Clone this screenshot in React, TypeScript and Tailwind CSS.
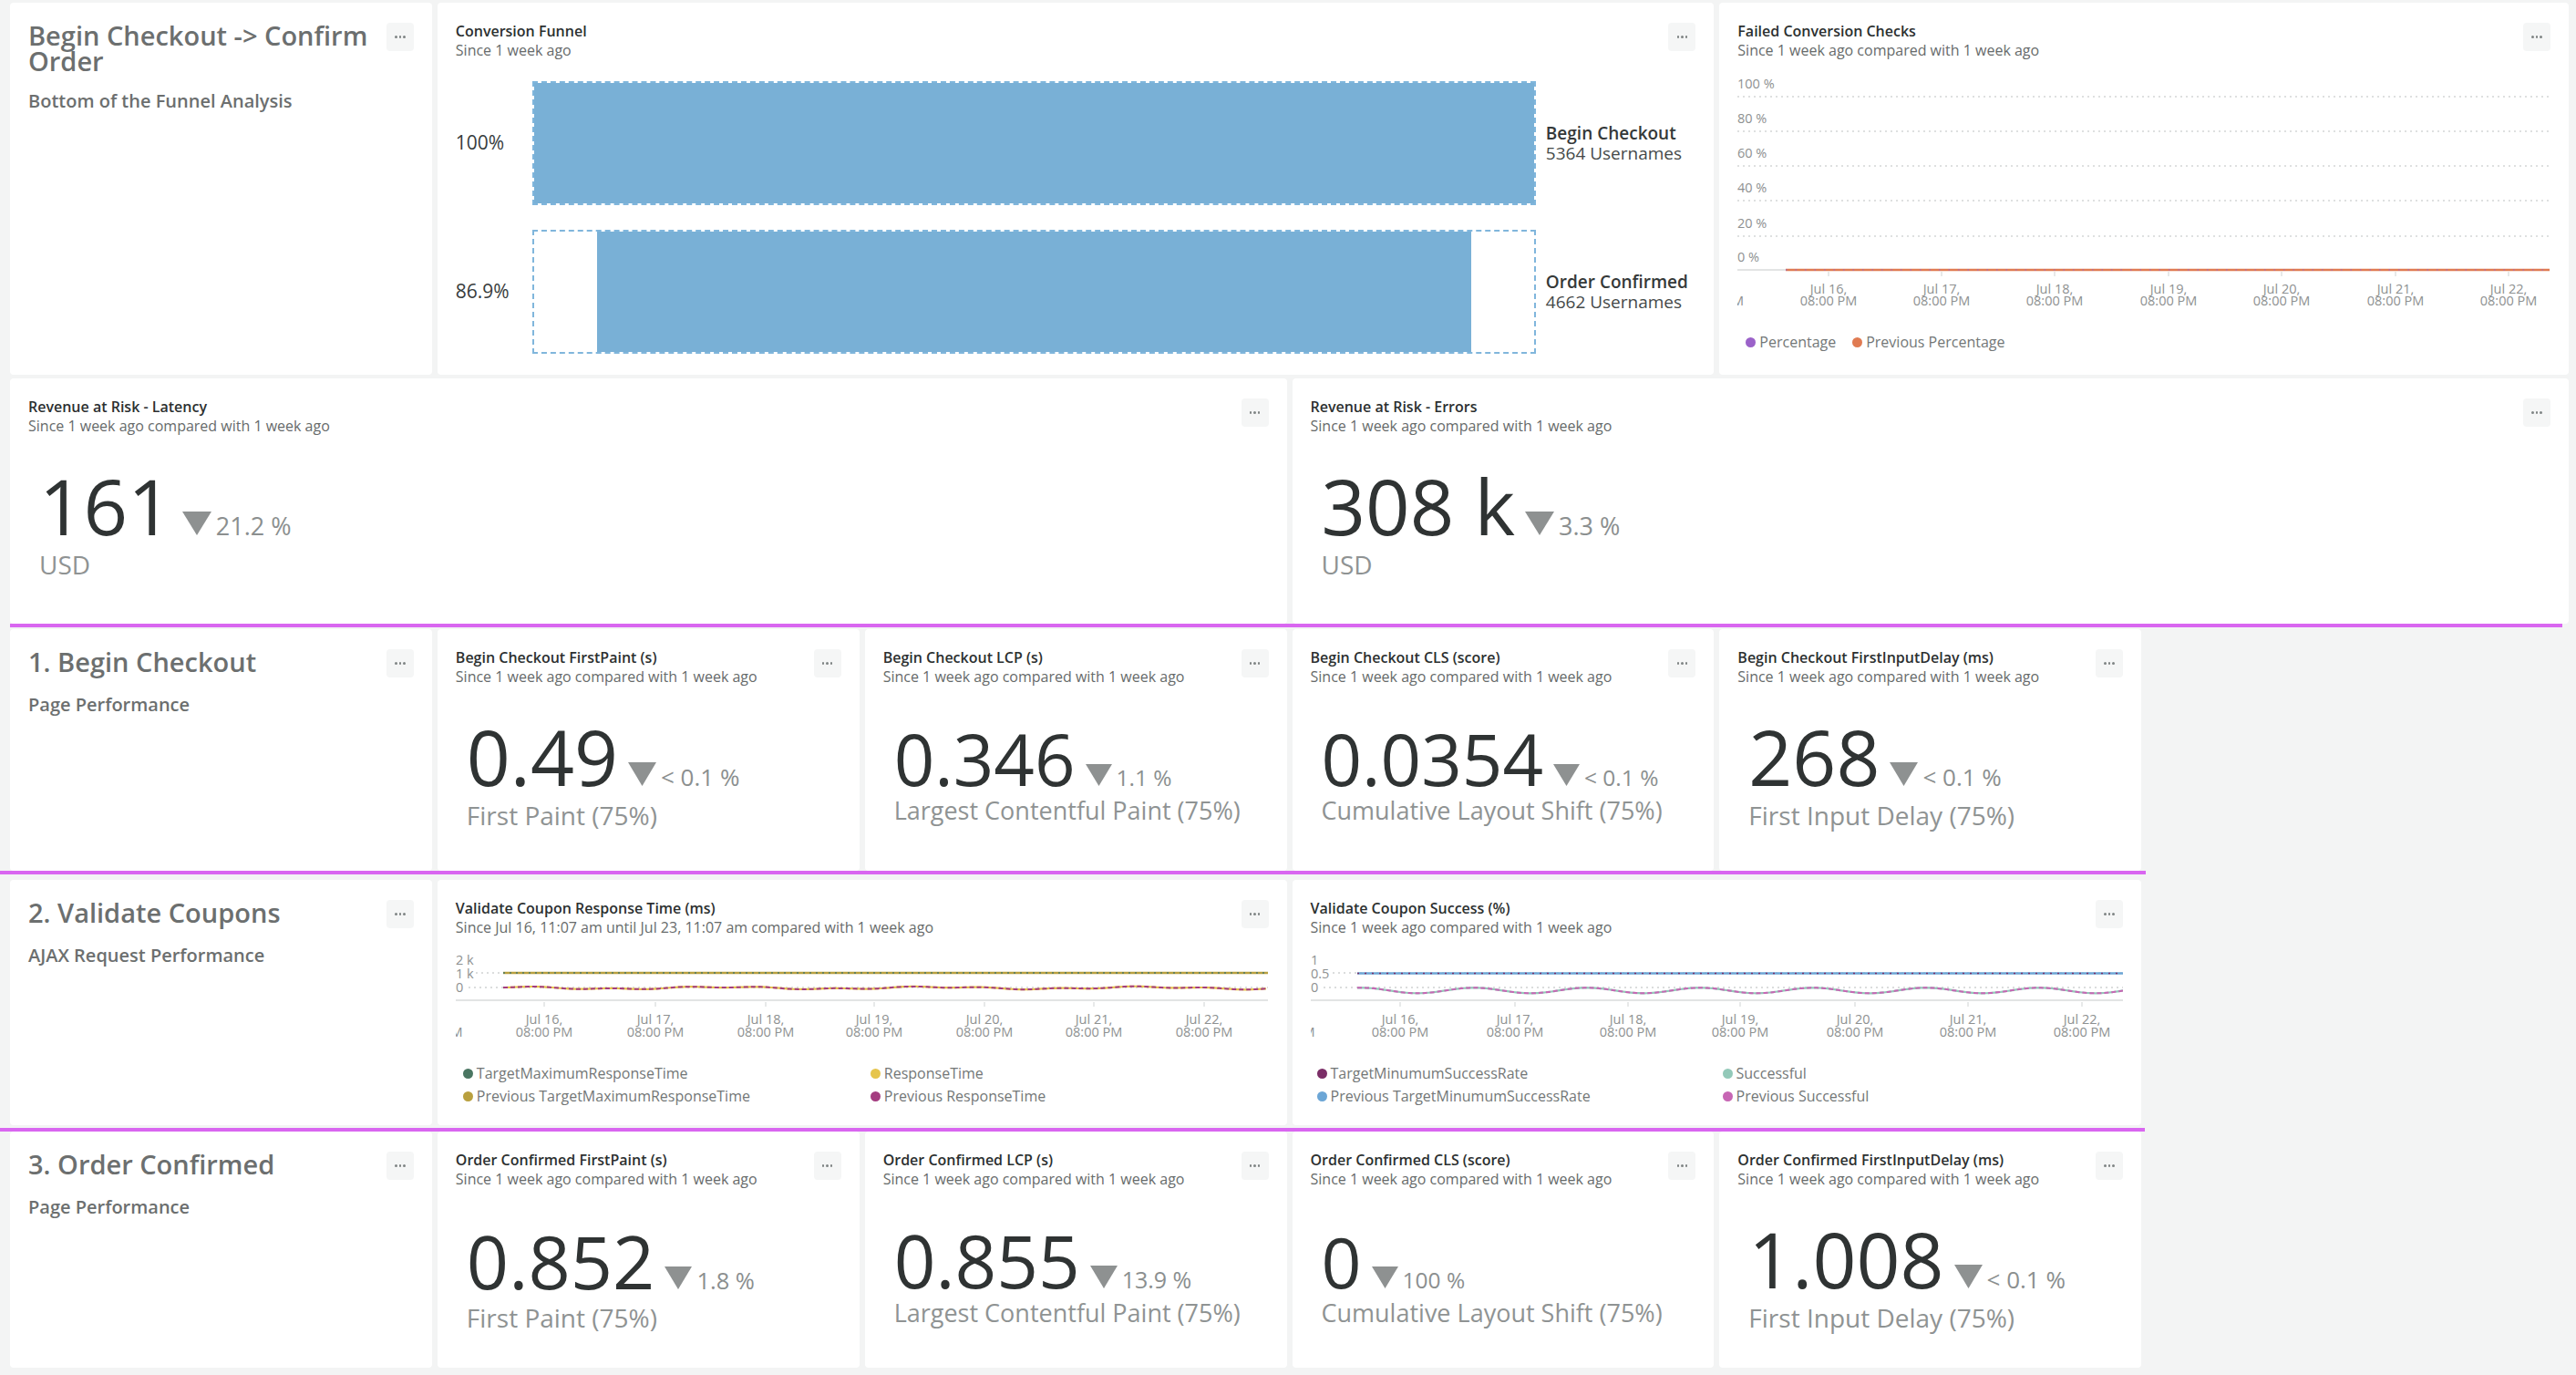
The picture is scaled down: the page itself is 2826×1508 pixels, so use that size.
import React from 'react';

type V = { num: string; trend: string; label: string; mt: string; lmt: string; tw: number; th: number };

const V85: V = { num: 'text-[85px]', trend: 'text-[27px]', label: 'text-[28px]', mt: 'mt-[34px]', lmt: 'mt-[5px]', tw: 32, th: 26 };
const V84: V = { num: 'text-[84px]', trend: 'text-[26px]', label: 'text-[28px]', mt: 'mt-[35px]', lmt: 'mt-[5px]', tw: 31, th: 26 };
const V81: V = { num: 'text-[81px]', trend: 'text-[25.5px]', label: 'text-[28px]', mt: 'mt-[38px]', lmt: 'mt-[5px]', tw: 30, th: 25 };
const V80: V = { num: 'text-[80px]', trend: 'text-[25px]', label: 'text-[27px]', mt: 'mt-[38px]', lmt: 'mt-[1px]', tw: 30, th: 25 };
const V78: V = { num: 'text-[78px]', trend: 'text-[24.5px]', label: 'text-[27px]', mt: 'mt-[40px]', lmt: 'mt-[1px]', tw: 29, th: 24 };
const V77: V = { num: 'text-[77px]', trend: 'text-[24.5px]', label: 'text-[27px]', mt: 'mt-[41px]', lmt: 'mt-[1px]', tw: 29, th: 24 };

const SUB = 'Since 1 week ago compared with 1 week ago';

function Dots() {
  return (
    <div className="w-[30px] h-[31px] shrink-0 rounded-[4px] bg-[#f5f6f6] flex items-center justify-center gap-[2px]">
      <span className="w-[2.5px] h-[2.5px] rounded-full bg-[#7f8484]" />
      <span className="w-[2.5px] h-[2.5px] rounded-full bg-[#7f8484]" />
      <span className="w-[2.5px] h-[2.5px] rounded-full bg-[#7f8484]" />
    </div>
  );
}

function Card({ className = '', children }: { className?: string; children?: React.ReactNode }) {
  return <div className={`bg-white rounded-[4px] min-w-0 ${className}`}>{children}</div>;
}

function WidgetHeader({ title, sub }: { title: string; sub: string }) {
  return (
    <div className="flex items-start justify-between">
      <div className="min-w-0">
        <div className="text-[16px] leading-[21px] font-semibold text-[#2c3030] whitespace-nowrap">{title}</div>
        <div className="text-[16px] leading-[21px] text-[#676b6b] whitespace-nowrap">{sub}</div>
      </div>
      <div className="mt-[1px] shrink-0">
        <Dots />
      </div>
    </div>
  );
}

function SectionCard({ title, sub, className = '' }: { title: string; sub: string; className?: string }) {
  return (
    <Card className={`px-[20px] pt-[22px] ${className}`}>
      <div className="flex items-start justify-between gap-[6px]">
        <div className="text-[29px] leading-[28px] font-semibold text-[#6c6f6f]">{title}</div>
        <Dots />
      </div>
      <div className="mt-[16px] text-[20px] leading-[28px] font-semibold text-[#6c6f6f]">{sub}</div>
    </Card>
  );
}

function MetricCard({
  title,
  sub = SUB,
  value,
  change,
  label,
  v,
  className = '',
}: {
  title: string;
  sub?: string;
  value: string;
  change: string;
  label: string;
  v: V;
  className?: string;
}) {
  return (
    <Card className={`px-[20px] pt-[21px] ${className}`}>
      <WidgetHeader title={title} sub={sub} />
      <div className={`pl-[12px] ${v.mt}`}>
        <div className="flex items-baseline whitespace-nowrap">
          <span className={`${v.num} leading-none text-[#2f3333]`}>{value}</span>
          <svg width={v.tw} height={v.th} className="ml-[11px] mb-[2px] shrink-0">
            <polygon points={`0,0 ${v.tw},0 ${v.tw / 2},${v.th}`} fill="#8e9191" />
          </svg>
          <span className={`${v.trend} leading-none ml-[5px] text-[#8b8f8f]`}>{change}</span>
        </div>
        <div className={`${v.label} leading-[34px] ${v.lmt} text-[#8f9393] whitespace-nowrap`}>{label}</div>
      </div>
    </Card>
  );
}

function FunnelRow({ pct, name, count, full }: { pct: string; name: string; count: string; full?: boolean }) {
  return (
    <div className="flex items-center">
      <div className="w-[84px] shrink-0 text-[21px] text-[#383c3c]">{pct}</div>
      <div className="w-[1101px] h-[136px] border-2 border-dashed border-[#80b6dc] flex shrink-0">
        <div className={full ? 'flex-1 bg-[#79b0d6]' : 'flex-1 mx-[69px] bg-[#79b0d6]'} />
      </div>
      <div className="ml-[11px] leading-[22px] text-[19px] whitespace-nowrap">
        <div className="font-semibold text-[#353939]">{name}</div>
        <div className="text-[#454949]">{count}</div>
      </div>
    </div>
  );
}

const DAYS = ['Jul 16,', 'Jul 17,', 'Jul 18,', 'Jul 19,', 'Jul 20,', 'Jul 21,', 'Jul 22,'];

function XAxis({ ticks, axisY, l1, l2, step }: { ticks: number[]; axisY: number; l1: number; l2: number; step: number }) {
  return (
    <g>
      <line x1={0} x2={891} y1={axisY} y2={axisY} stroke="#e2e4e4" strokeWidth={2} />
      {ticks.map((t, i) => (
        <g key={i}>
          <line x1={t} x2={t} y1={axisY + 2} y2={axisY + 7} stroke="#d0d3d3" strokeWidth={1} />
          <text x={t} y={l1} textAnchor="middle">
            {DAYS[i]}
          </text>
          <text x={t} y={l2} textAnchor="middle">
            08:00 PM
          </text>
        </g>
      ))}
      <text x={ticks[0] - step} y={l2} textAnchor="middle">
        08:00 PM
      </text>
    </g>
  );
}

function pathOf(x0: number, x1: number, f: (x: number) => number, step = 3) {
  let d = `M${x0},${f(x0).toFixed(2)}`;
  for (let x = x0 + step; x <= x1; x += step) d += ` L${x},${f(x).toFixed(2)}`;
  return d;
}

function FailedChart() {
  const grid = [40, 78, 116, 154, 193];
  const labels = ['100 %', '80 %', '60 %', '40 %', '20 %'];
  const ticks = [100, 224, 348, 473, 597, 722, 846];
  return (
    <svg width={891} height={290} className="block">
      <g fill="#8e9191" fontSize={14.5}>
        {grid.map((y, i) => (
          <g key={i}>
            <line x1={0} x2={891} y1={y} y2={y} stroke="#d3d6d6" strokeWidth={1.5} strokeDasharray="2 4" />
            <text x={0} y={y - 9}>
              {labels[i]}
            </text>
          </g>
        ))}
        <text x={0} y={221}>
          0 %
        </text>
        <XAxis ticks={ticks} axisY={230} l1={256} l2={269} step={124.3} />
        <line x1={53} x2={891} y1={230} y2={230} stroke="#e07b52" strokeWidth={2.5} />
        <line x1={53} x2={891} y1={230} y2={230} stroke="#9b5fc9" strokeWidth={1.2} strokeDasharray="1.5 9" />
      </g>
    </svg>
  );
}

function ResponseChart() {
  const ticks = [97, 219, 340, 459, 580, 700, 821];
  const wave = (x: number) => 55.5 - 1.1 * Math.sin(x / 37) - 0.7 * Math.sin(x / 13 + 1);
  return (
    <svg width={891} height={115} className="block">
      <g fill="#8e9191" fontSize={14.5}>
        <text x={0} y={30}>2 k</text>
        <text x={0} y={45}>1 k</text>
        <text x={0} y={60}>0</text>
        <line x1={22} x2={891} y1={39} y2={39} stroke="#cfd2d2" strokeWidth={1.5} strokeDasharray="2 4" />
        <line x1={14} x2={891} y1={55} y2={55} stroke="#cfd2d2" strokeWidth={1.5} strokeDasharray="2 4" />
        <XAxis ticks={ticks} axisY={69} l1={95} l2={109} step={120.7} />
        <line x1={52} x2={891} y1={39} y2={39} stroke="#b9a03f" strokeWidth={2.5} />
        <line x1={52} x2={891} y1={39} y2={39} stroke="#4a7662" strokeWidth={1.5} strokeDasharray="2 5" />
        <path d={pathOf(52, 891, wave)} fill="none" stroke="#e6c54c" strokeWidth={2.2} />
        <path d={pathOf(52, 891, wave)} fill="none" stroke="#a43d80" strokeWidth={2} strokeDasharray="5 3" />
      </g>
    </svg>
  );
}

function SuccessChart() {
  const ticks = [98, 224, 348, 471, 597, 721, 846];
  const wave = (x: number) => 58.3 - 3 * Math.cos((2 * Math.PI * (x - 55)) / 124);
  return (
    <svg width={891} height={115} className="block">
      <g fill="#8e9191" fontSize={14.5}>
        <text x={0} y={30}>1</text>
        <text x={0} y={45}>0.5</text>
        <text x={0} y={60}>0</text>
        <line x1={24} x2={891} y1={39} y2={39} stroke="#cfd2d2" strokeWidth={1.5} strokeDasharray="2 4" />
        <line x1={14} x2={891} y1={55} y2={55} stroke="#cfd2d2" strokeWidth={1.5} strokeDasharray="2 4" />
        <XAxis ticks={ticks} axisY={69} l1={95} l2={109} step={124.6} />
        <line x1={51} x2={891} y1={39.5} y2={39.5} stroke="#6ca6d6" strokeWidth={2.5} />
        <line x1={51} x2={891} y1={39.5} y2={39.5} stroke="#7b2e67" strokeWidth={1.5} strokeDasharray="2 6" />
        <path d={pathOf(51, 891, wave)} fill="none" stroke="#93c9b9" strokeWidth={2.2} />
        <path d={pathOf(51, 891, wave)} fill="none" stroke="#c766b4" strokeWidth={2} strokeDasharray="5 3" />
      </g>
    </svg>
  );
}

function LegendItem({ color, text }: { color: string; text: string }) {
  return (
    <div className="flex items-center gap-[4px] whitespace-nowrap">
      <span className={`w-[11px] h-[11px] rounded-full shrink-0 ${color}`} />
      <span>{text}</span>
    </div>
  );
}

const ROW = 'grid grid-cols-6 gap-x-[6px] pl-[11px] pr-[8px]';

export default function App() {
  return (
    <div className="w-[2826px] h-[1508px] bg-[#f3f4f4] overflow-hidden font-['Open_Sans',sans-serif]">
      {/* Row 1 */}
      <div className={`${ROW} h-[408px] mt-[3px]`}>
        <SectionCard title="Begin Checkout -> Confirm Order" sub="Bottom of the Funnel Analysis" />
        <Card className="col-span-3 px-[20px] pt-[21px]">
          <WidgetHeader title="Conversion Funnel" sub="Since 1 week ago" />
          <div className="mt-[23px] flex flex-col gap-[27px]">
            <FunnelRow pct="100%" name="Begin Checkout" count="5364 Usernames" full />
            <FunnelRow pct="86.9%" name="Order Confirmed" count="4662 Usernames" />
          </div>
        </Card>
        <Card className="col-span-2 px-[20px] pt-[21px]">
          <WidgetHeader title="Failed Conversion Checks" sub={SUB} />
          <FailedChart />
          <div className="mt-[9px] pl-[9px] flex gap-[18px] text-[16px] leading-[20px] text-[#737777]">
            <LegendItem color="bg-[#9b62c9]" text="Percentage" />
            <LegendItem color="bg-[#e07b52]" text="Previous Percentage" />
          </div>
        </Card>
      </div>

      {/* Row 2 */}
      <div className={`${ROW} h-[269px] mt-[4px]`}>
        <MetricCard className="col-span-3" title="Revenue at Risk - Latency" value="161" change="21.2 %" label="USD" v={V85} />
        <MetricCard className="col-span-3" title="Revenue at Risk - Errors" value="308 k" change="3.3 %" label="USD" v={V85} />
      </div>
      <div className="h-[4px] ml-[11px] w-[2800px] bg-[#d966f0]" />

      {/* Row 3 */}
      <div className={`${ROW} h-[265px] mt-[2px]`}>
        <SectionCard title="1. Begin Checkout" sub="Page Performance" />
        <MetricCard title="Begin Checkout FirstPaint (s)" value="0.49" change="< 0.1 %" label="First Paint (75%)" v={V84} />
        <MetricCard title="Begin Checkout LCP (s)" value="0.346" change="1.1 %" label="Largest Contentful Paint (75%)" v={V78} />
        <MetricCard title="Begin Checkout CLS (score)" value="0.0354" change="< 0.1 %" label="Cumulative Layout Shift (75%)" v={V78} />
        <MetricCard title="Begin Checkout FirstInputDelay (ms)" value="268" change="< 0.1 %" label="First Input Delay (75%)" v={V84} />
      </div>
      <div className="h-[4px] w-[2354px] bg-[#d966f0]" />

      {/* Row 4 */}
      <div className={`${ROW} h-[269px] mt-[6px]`}>
        <SectionCard title="2. Validate Coupons" sub="AJAX Request Performance" />
        <Card className="col-span-2 px-[20px] pt-[21px]">
          <WidgetHeader title="Validate Coupon Response Time (ms)" sub="Since Jul 16, 11:07 am until Jul 23, 11:07 am compared with 1 week ago" />
          <ResponseChart />
          <div className="mt-[22px] pl-[8px] grid grid-cols-[447px_1fr] text-[16px] leading-[25px] text-[#737777]">
            <LegendItem color="bg-[#4a7662]" text="TargetMaximumResponseTime" />
            <LegendItem color="bg-[#e6c54c]" text="ResponseTime" />
            <LegendItem color="bg-[#b9a03f]" text="Previous TargetMaximumResponseTime" />
            <LegendItem color="bg-[#a43d80]" text="Previous ResponseTime" />
          </div>
        </Card>
        <Card className="col-span-2 px-[20px] pt-[21px]">
          <WidgetHeader title="Validate Coupon Success (%)" sub={SUB} />
          <SuccessChart />
          <div className="mt-[22px] pl-[7px] grid grid-cols-[445px_1fr] text-[16px] leading-[25px] text-[#737777]">
            <LegendItem color="bg-[#7b2e67]" text="TargetMinumumSuccessRate" />
            <LegendItem color="bg-[#93c9b9]" text="Successful" />
            <LegendItem color="bg-[#6ca6d6]" text="Previous TargetMinumumSuccessRate" />
            <LegendItem color="bg-[#c766b4]" text="Previous Successful" />
          </div>
        </Card>
      </div>
      <div className="h-[4px] w-[2353px] bg-[#d966f0] mt-[3px]" />

      {/* Row 5 */}
      <div className={`${ROW} h-[259px]`}>
        <SectionCard title="3. Order Confirmed" sub="Page Performance" />
        <MetricCard title="Order Confirmed FirstPaint (s)" value="0.852" change="1.8 %" label="First Paint (75%)" v={V81} />
        <MetricCard title="Order Confirmed LCP (s)" value="0.855" change="13.9 %" label="Largest Contentful Paint (75%)" v={V80} />
        <MetricCard title="Order Confirmed CLS (score)" value="0" change="100 %" label="Cumulative Layout Shift (75%)" v={V77} />
        <MetricCard title="Order Confirmed FirstInputDelay (ms)" value="1.008" change="< 0.1 %" label="First Input Delay (75%)" v={V84} />
      </div>
    </div>
  );
}
